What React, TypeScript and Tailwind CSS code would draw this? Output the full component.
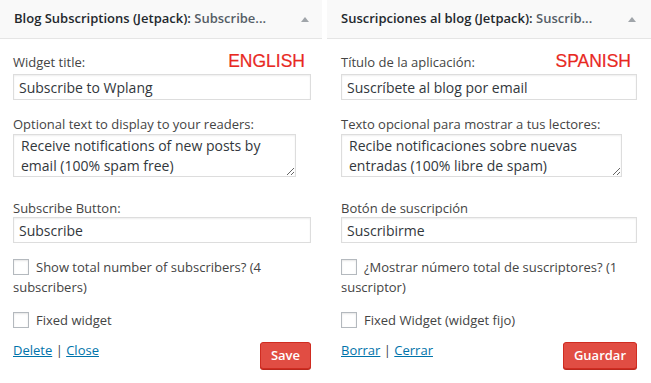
import React from "react";

type Widget = {
  title: string;
  sub: string;
  tag: string;
  titleLabel: string;
  titleValue: string;
  textLabel: string;
  textValue: string;
  buttonLabel: string;
  buttonValue: string;
  countLabel: string;
  fixedLabel: string;
  del: string;
  close: string;
  save: string;
};

const widgets: Widget[] = [
  {
    title: "Blog Subscriptions (Jetpack):",
    sub: "Subscribe...",
    tag: "ENGLISH",
    titleLabel: "Widget title:",
    titleValue: "Subscribe to Wplang",
    textLabel: "Optional text to display to your readers:",
    textValue: "Receive notifications of new posts by email (100% spam free)",
    buttonLabel: "Subscribe Button:",
    buttonValue: "Subscribe",
    countLabel: "Show total number of subscribers? (4 subscribers)",
    fixedLabel: "Fixed widget",
    del: "Delete",
    close: "Close",
    save: "Save",
  },
  {
    title: "Suscripciones al blog (Jetpack):",
    sub: "Suscrib...",
    tag: "SPANISH",
    titleLabel: "Título de la aplicación:",
    titleValue: "Suscríbete al blog por email",
    textLabel: "Texto opcional para mostrar a tus lectores:",
    textValue: "Recibe notificaciones sobre nuevas entradas (100% libre de spam)",
    buttonLabel: "Botón de suscripción",
    buttonValue: "Suscribirme",
    countLabel: "¿Mostrar número total de suscriptores? (1 suscriptor)",
    fixedLabel: "Fixed Widget (widget fijo)",
    del: "Borrar",
    close: "Cerrar",
    save: "Guardar",
  },
];

function Checkbox() {
  return (
    <span className="inline-block w-[16px] h-[16px] align-[-3px] mr-[7px] border border-[#b4b9be] bg-white shadow-[inset_0_1px_2px_rgba(0,0,0,0.1)]" />
  );
}

function Panel({ w, left }: { w: Widget; left?: boolean }) {
  return (
    <div className={left ? "w-[322px] bg-white" : "flex-1 bg-white"}>
      <div className={`h-[39px] flex items-center justify-between bg-[#f9f9f9] border-b border-[#e5e5e5] ${left ? "pl-[14px] pr-[13px]" : "pl-[14px] pr-[15px]"}`}>
        <div className="text-[13px] font-semibold text-[#23282d] whitespace-nowrap">
          {w.title} <span className="text-[#555d66]">{w.sub}</span>
        </div>
        <span className="w-0 h-0 border-l-[4px] border-r-[4px] border-b-[5px] border-l-transparent border-r-transparent border-b-[#a0a5aa]" />
      </div>

      <div className={`pt-[14px] ${left ? "pl-[13px] pr-[11px]" : "pl-[14px] pr-[14px]"} text-[13px] text-[#444]`}>
        <div className="flex items-center justify-between h-[18px] leading-[18px] mb-[3px]">
          <span>{w.titleLabel}</span>
          <span className="font-['Liberation_Sans',Arial,sans-serif] text-[17.5px] text-[#e8291f] [-webkit-text-stroke:0.2px_#e8291f] mr-[6px] -mt-[2px]">{w.tag}</span>
        </div>
        <input
          readOnly
          value={w.titleValue}
          className="block w-full h-[26px] px-[5px] border border-[#ddd] text-[14px] text-[#32373c] shadow-[inset_0_1px_2px_rgba(0,0,0,0.07)] outline-none"
        />

        <div className="h-[18px] leading-[18px] mt-[15px] mb-[1px]">{w.textLabel}</div>
        <textarea
          readOnly
          value={w.textValue}
          className={`block h-[43px] px-[7px] py-[1px] border border-[#ddd] text-[14px] leading-[20px] text-[#32373c] shadow-[inset_0_1px_2px_rgba(0,0,0,0.07)] outline-none resize-y overflow-hidden ${left ? "w-[283px]" : "w-[281px]"}`}
        />

        <div className="h-[18px] leading-[18px] mt-[22px]">{w.buttonLabel}</div>
        <input
          readOnly
          value={w.buttonValue}
          className="block w-full h-[26px] px-[5px] border border-[#ddd] text-[14px] text-[#32373c] shadow-[inset_0_1px_2px_rgba(0,0,0,0.07)] outline-none"
        />

        <p className="mt-[14px] leading-[20px]">
          <Checkbox />
          {w.countLabel}
        </p>
        <p className="mt-[13px] leading-[20px]">
          <Checkbox />
          {w.fixedLabel}
        </p>

        <div className="flex items-start justify-between mt-[11px]">
          <div className="leading-[18px]">
            <a className="text-[#0073aa] underline">{w.del}</a>
            <span className="text-[#444]"> | </span>
            <a className="text-[#0073aa] underline">{w.close}</a>
          </div>
          <button className="h-[27px] px-[10px] mt-[1px] rounded-[3px] bg-[#e14d43] border border-[#d02c21] text-white text-[13px] font-semibold shadow-[0_1px_0_#ba281e]">
            {w.save}
          </button>
        </div>
      </div>
    </div>
  );
}

export default function App() {
  return (
    <div className="w-[651px] h-[383px] overflow-hidden flex gap-[5px] bg-white font-['Open_Sans',sans-serif]">
      <Panel w={widgets[0]} left />
      <Panel w={widgets[1]} />
    </div>
  );
}
